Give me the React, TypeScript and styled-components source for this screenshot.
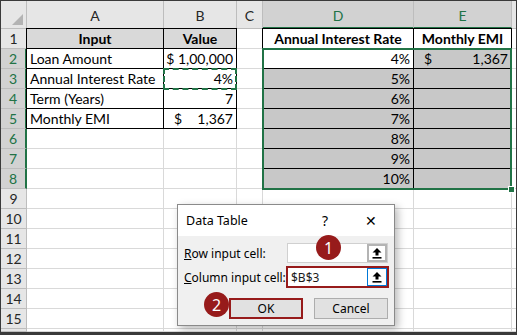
import React from "react";
import styled, { createGlobalStyle, css } from "styled-components";

const GREEN = "#217346";
const GRID = "#d9d9d9";
const HEAD_LINE = "#bdbdbd";
const SEL_FILL = "#c8c8c8";
const TABLE_HEAD = "#d9d9d9";
const MAROON = "#971b1b";

const GlobalStyle = createGlobalStyle`
  html, body { margin: 0; padding: 0; background: #fff; }
  * { box-sizing: border-box; }
`;

const Frame = styled.div`
  position: relative;
  width: 517px;
  height: 335px;
  overflow: hidden;
  border: 1px solid #3a3a3a;
  border-bottom-width: 3px;
  background: #fff;
`;

const Stack = styled.div`
  display: grid;
  height: 100%;
  & > * {
    grid-area: 1 / 1;
  }
`;

const sheetGrid = css`
  display: grid;
  grid-template-columns: 26px 137px 73px 26px 151px 98px 1fr;
  grid-template-rows: 28px repeat(15, 20px) 1fr;
  height: 100%;
`;

const Sheet = styled.div`
  ${sheetGrid};
  font-family: "Lato", "Liberation Sans", sans-serif;
  font-size: 14px;
  color: #000;
`;

const OverlayLayer = styled.div`
  ${sheetGrid};
  pointer-events: none;
`;

const Corner = styled.div`
  display: flex;
  align-items: flex-end;
  justify-content: flex-end;
  padding: 0 3px 3px 0;
  background: #e6e6e6;
  border-right: 1px solid ${HEAD_LINE};
  border-bottom: 1px solid ${HEAD_LINE};
`;

const Triangle = styled.div`
  width: 0;
  height: 0;
  border-left: 11px solid transparent;
  border-bottom: 11px solid #b3b3b3;
`;

const ColHead = styled.div<{ $sel?: boolean }>`
  display: flex;
  align-items: center;
  justify-content: center;
  padding-top: 2px;
  font-size: 14px;
  background: ${(p) => (p.$sel ? "#d2d2d2" : "#e6e6e6")};
  color: ${(p) => (p.$sel ? GREEN : "#262626")};
  border-right: 1px solid ${HEAD_LINE};
  border-bottom: ${(p) => (p.$sel ? `2px solid ${GREEN}` : `1px solid ${HEAD_LINE}`)};
`;

const RowHead = styled.div<{ $sel?: boolean }>`
  display: flex;
  align-items: center;
  justify-content: center;
  font-size: 14px;
  background: ${(p) => (p.$sel ? "#d2d2d2" : "#e6e6e6")};
  color: ${(p) => (p.$sel ? GREEN : "#262626")};
  border-right: ${(p) => (p.$sel ? `2px solid ${GREEN}` : `1px solid ${HEAD_LINE}`)};
  border-bottom: 1px solid ${HEAD_LINE};
`;

type Align = "left" | "right" | "center";

const Cell = styled.div<{ $align?: Align; $bold?: boolean; $fill?: string; $box?: boolean }>`
  display: flex;
  align-items: flex-end;
  justify-content: ${(p) =>
    p.$align === "right" ? "flex-end" : p.$align === "center" ? "center" : "flex-start"};
  padding: 0 3px 1px;
  white-space: nowrap;
  overflow: hidden;
  font-weight: ${(p) => (p.$bold ? 700 : 400)};
  background: ${(p) => p.$fill ?? "#fff"};
  border-right: 1px solid ${(p) => (p.$box ? "#000" : GRID)};
  border-bottom: 1px solid ${(p) => (p.$box ? "#000" : GRID)};
  ${(p) =>
    p.$box &&
    css`
      box-shadow: -1px 0 0 #000, 0 -1px 0 #000, -1px -1px 0 #000;
    `}
`;

const Acct = styled.span`
  display: flex;
  justify-content: space-between;
  width: 100%;
  padding-left: 7px;
`;

const Selection = styled.div`
  grid-column: 5 / 7;
  grid-row: 3 / 10;
  position: relative;
  margin: -1px 0 -1px -1px;
  border: 2px solid ${GREEN};
`;

const FillHandle = styled.div`
  position: absolute;
  right: -5px;
  bottom: -5px;
  width: 7px;
  height: 7px;
  background: ${GREEN};
  border: 1px solid #fff;
`;

const Ants = styled.div`
  grid-column: 3 / 4;
  grid-row: 4 / 5;
  margin: -1px 0 -1px -1px;
  border: 2px dashed ${GREEN};
`;

/* dialog */

const Dialog = styled.div`
  position: absolute;
  left: 176px;
  top: 203px;
  width: 218px;
  height: 122px;
  display: flex;
  flex-direction: column;
  background: #f0f0f0;
  border: 1px solid #8a8a8a;
  box-shadow: 3px 3px 8px rgba(0, 0, 0, 0.28);
  font-family: "Noto Sans", "Open Sans", sans-serif;
  font-size: 12px;
  color: #000;
`;

const TitleBar = styled.div`
  display: flex;
  align-items: center;
  height: 31px;
  padding-left: 8px;
  background: #fff;
`;

const Title = styled.span`
  flex: 1;
  font-size: 12.5px;
`;

const TitleButton = styled.span`
  width: 46px;
  text-align: center;
  font-size: 14px;
`;

const DialogBody = styled.div`
  display: flex;
  flex-direction: column;
  gap: 4px;
  padding: 7px 6px 0 6px;
`;

const FieldRow = styled.div`
  display: flex;
  align-items: center;
  height: 20px;
`;

const Label = styled.span`
  width: 103px;
`;

const Field = styled.div<{ $marked?: boolean }>`
  display: flex;
  width: 101px;
  height: 20px;
  background: #fff;
  border: 1px solid ${(p) => (p.$marked ? MAROON : "#d0d0d0")};
  ${(p) =>
    p.$marked &&
    css`
      outline: 1px solid ${MAROON};
    `}
`;

const FieldText = styled.span`
  flex: 1;
  padding: 1px 3px 0;
  font-size: 12px;
  color: #1a1a1a;
`;

const PickButton = styled.div<{ $focus?: boolean }>`
  display: flex;
  align-items: center;
  justify-content: center;
  width: 20px;
  height: 100%;
  background: #fff;
  border: ${(p) => (p.$focus ? "1px solid #0078d7" : "2px solid #b4b4b4")};
`;

const ButtonRow = styled.div`
  display: flex;
  justify-content: flex-end;
  gap: 11px;
  margin-top: 7px;
`;

const DlgButton = styled.div<{ $marked?: boolean }>`
  display: flex;
  align-items: center;
  justify-content: center;
  width: 74px;
  height: 21px;
  background: #e1e1e1;
  border: ${(p) => (p.$marked ? `2px solid ${MAROON}` : "1px solid #adadad")};
`;

const Badge = styled.div<{ $x: number; $y: number }>`
  position: absolute;
  left: ${(p) => p.$x}px;
  top: ${(p) => p.$y}px;
  width: 25px;
  height: 25px;
  border-radius: 50%;
  display: flex;
  align-items: center;
  justify-content: center;
  background: ${MAROON};
  color: #fff;
  font-family: "Noto Sans", "Open Sans", sans-serif;
  font-size: 16px;
`;

const PickIcon = () => (
  <svg width="12" height="12" viewBox="0 0 12 12">
    <path d="M6 1 L10.5 5.5 H7.5 V8.5 H4.5 V5.5 H1.5 Z" fill="#000" />
    <rect x="1.5" y="10" width="9" height="1.6" fill="#000" />
  </svg>
);

type Spec = {
  t?: React.ReactNode;
  align?: Align;
  bold?: boolean;
  fill?: string;
  box?: boolean;
  acct?: string;
};

const E: Spec = {};
const head = (t: string): Spec => ({ t, bold: true, align: "center", fill: TABLE_HEAD, box: true });
const lbl = (t: string): Spec => ({ t, box: true });
const num = (t: string): Spec => ({ t, align: "right", box: true });
const rate = (t: string): Spec => ({ t, align: "right", box: true, fill: SEL_FILL });
const emi: Spec = { box: true, fill: SEL_FILL };

const rows: Spec[][] = [
  [head("Input"), head("Value"), E, { t: "Annual Interest Rate", bold: true, align: "center", box: true }, { t: "Monthly EMI", bold: true, align: "center", box: true }],
  [lbl("Loan Amount"), num("$ 1,00,000"), E, num("4%"), { acct: "1,367", box: true, fill: SEL_FILL }],
  [lbl("Annual Interest Rate"), num("4%"), E, rate("5%"), emi],
  [lbl("Term (Years)"), num("7"), E, rate("6%"), emi],
  [lbl("Monthly EMI"), { acct: "1,367", box: true }, E, rate("7%"), emi],
  [E, E, E, rate("8%"), emi],
  [E, E, E, rate("9%"), emi],
  [E, E, E, rate("10%"), emi],
];

const renderCell = (s: Spec, key: string) => (
  <Cell key={key} $align={s.align} $bold={s.bold} $fill={s.fill} $box={s.box}>
    {s.acct ? (
      <Acct>
        <span>$</span>
        <span>{s.acct}</span>
      </Acct>
    ) : (
      s.t
    )}
  </Cell>
);

export default function App() {
  const letters = ["A", "B", "C", "D", "E", ""];
  const all = Array.from({ length: 16 }, (_, i) => rows[i] ?? [E, E, E, E, E]);

  return (
    <>
      <GlobalStyle />
      <Frame>
        <Stack>
          <Sheet>
            <Corner>
              <Triangle />
            </Corner>
            {letters.map((l) => (
              <ColHead key={"h" + l} $sel={l === "D" || l === "E"}>
                {l}
              </ColHead>
            ))}
            {all.map((r, i) => (
              <React.Fragment key={i}>
                {/* the 16th row is only a sliver under the last full row */}
                <RowHead $sel={i >= 1 && i <= 7}>{i < 15 ? i + 1 : ""}</RowHead>
                {r.map((s, j) => renderCell(s, `${i}-${j}`))}
                {renderCell(E, `${i}-f`)}
              </React.Fragment>
            ))}
          </Sheet>
          <OverlayLayer>
            <Ants />
            <Selection>
              <FillHandle />
            </Selection>
          </OverlayLayer>
        </Stack>

        <Dialog>
          <TitleBar>
            <Title>Data Table</Title>
            <TitleButton>?</TitleButton>
            <TitleButton>✕</TitleButton>
          </TitleBar>
          <DialogBody>
            <FieldRow>
              <Label>
                <u>R</u>ow input cell:
              </Label>
              <Field>
                <FieldText />
                <PickButton>
                  <PickIcon />
                </PickButton>
              </Field>
            </FieldRow>
            <FieldRow>
              <Label>
                <u>C</u>olumn input cell:
              </Label>
              <Field $marked>
                <FieldText>$B$3</FieldText>
                <PickButton $focus>
                  <PickIcon />
                </PickButton>
              </Field>
            </FieldRow>
            <ButtonRow>
              <DlgButton $marked>OK</DlgButton>
              <DlgButton>Cancel</DlgButton>
            </ButtonRow>
          </DialogBody>
        </Dialog>

        <Badge $x={315} $y={234}>1</Badge>
        <Badge $x={203} $y={291}>2</Badge>
      </Frame>
    </>
  );
}
